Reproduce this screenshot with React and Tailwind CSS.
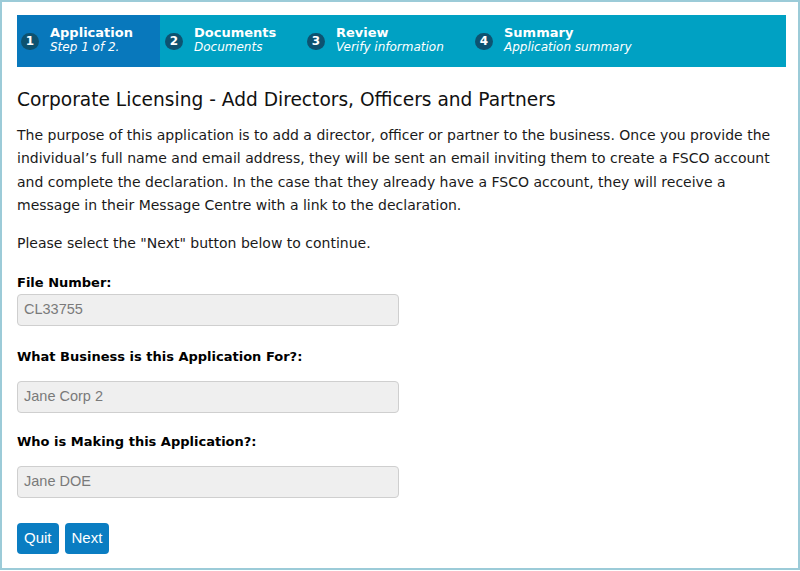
import React from 'react';

const steps = [
  { n: 1, title: 'Application', sub: 'Step 1 of 2.', w: 'w-[143px] pl-[4px]', active: true },
  { n: 2, title: 'Documents', sub: 'Documents', w: 'w-[141px] pl-[5px]' },
  { n: 3, title: 'Review', sub: 'Verify information', w: 'w-[169px] pl-[6px]' },
  { n: 4, title: 'Summary', sub: 'Application summary', w: 'flex-1 pl-[5px]' },
];

const Field = ({ label, value, gap }) => (
  <div className="flex flex-col">
    <label className={`text-[13px] font-bold text-black leading-[16px] ${gap}`}>{label}</label>
    <div className="w-[382px] h-[32px] rounded-[4px] border border-[#cfcfcf] bg-[#efefef] px-[6px] flex items-center text-[14.5px] text-[#7a7a7a] font-['Liberation_Sans',Arial,sans-serif]">
      {value}
    </div>
  </div>
);

export default function App() {
  return (
    <div className="h-[570px] w-[800px] border-2 border-[#9ccbd8] bg-white pt-[13px] pl-[15px] pr-[12px] font-['DejaVu_Sans',Verdana,sans-serif] text-[#1a1a1a]">
      <div className="flex h-[52px] bg-[#00a1c3] text-white">
        {steps.map(s => (
          <div key={s.n} className={`flex items-center gap-[11px] ${s.w} ${s.active ? 'bg-[#0878bc]' : ''}`}>
            <span className="w-[18px] h-[17px] shrink-0 rounded-full bg-[#0d5270] flex items-center justify-center text-[12px] font-bold leading-none">{s.n}</span>
            <div className="flex flex-col leading-[14px] -mt-[3px]">
              <span className="text-[13px] font-bold">{s.title}</span>
              <span className="text-[12px] italic">{s.sub}</span>
            </div>
          </div>
        ))}
      </div>

      <h1 className="mt-[20px] text-[18.6px] leading-[26px] text-[#111]">Corporate Licensing - Add Directors, Officers and Partners</h1>

      <p className="mt-[11px] text-[14px] leading-[23.3px] pr-[4px]">
        The purpose of this application is to add a director, officer or partner to the business. Once you provide the individual’s full name and email address, they will be sent an email inviting them to create a FSCO account and complete the declaration. In the case that they already have a FSCO account, they will receive a message in their Message Centre with a link to the declaration.
      </p>
      <p className="mt-[15px] text-[14px] leading-[23px]">Please select the "Next" button below to continue.</p>

      <div className="mt-[20px] flex flex-col">
        <Field label="File Number:" value="CL33755" gap="mb-[3px]" />
        <div className="mt-[23px]"><Field label="What Business is this Application For?:" value="Jane Corp 2" gap="mb-[16px]" /></div>
        <div className="mt-[21px]"><Field label="Who is Making this Application?:" value="Jane DOE" gap="mb-[16px]" /></div>
      </div>

      <div className="mt-[25px] flex gap-[6px] font-['Liberation_Sans',Arial,sans-serif]">
        <button className="h-[31px] px-[7px] rounded-[4px] bg-[#0a7dc2] text-white text-[15px]">Quit</button>
        <button className="h-[31px] px-[7px] rounded-[4px] bg-[#0a7dc2] text-white text-[15px]">Next</button>
      </div>
    </div>
  );
}
